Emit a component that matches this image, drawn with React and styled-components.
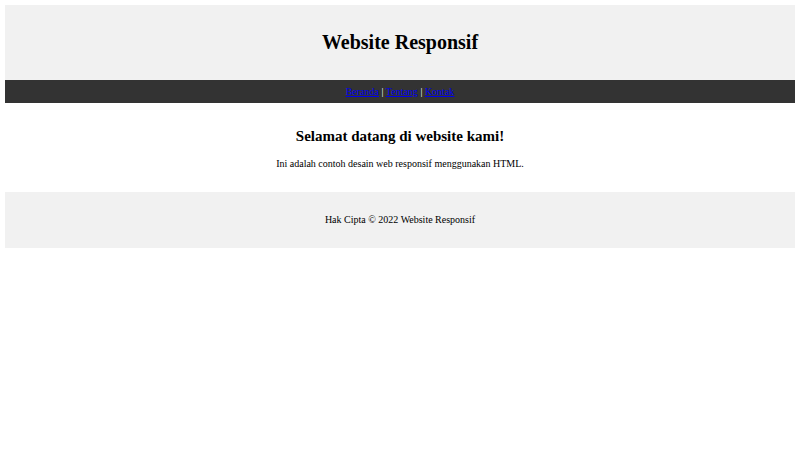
import React from "react";
import styled, { createGlobalStyle } from "styled-components";

const Global = createGlobalStyle`
  body {
    margin: 5px;
    font-family: "Liberation Serif", "Times New Roman", serif;
    background: #fff;
    color: #000;
  }
`;

const Header = styled.header`
  background: #f1f1f1;
  padding: 26px 0;
  text-align: center;
`;

const Title = styled.h1`
  margin: 0;
  font-size: 20px;
  line-height: 23px;
  font-weight: bold;
`;

const Nav = styled.nav`
  background: #333;
  color: #fff;
  text-align: center;
  padding: 6px 0 5.5px;
  font-size: 10px;
  line-height: 11.5px;
`;

const NavLink = styled.a`
  color: #0000ee;
  text-decoration: underline;
`;

const Main = styled.main`
  padding: 12.5px 0;
  text-align: center;
`;

const Heading = styled.h2`
  margin: 12.45px 0;
  font-size: 15px;
  line-height: 17.25px;
  font-weight: bold;
`;

const Para = styled.p`
  margin: 10px 0;
  font-size: 10px;
  line-height: 11.5px;
`;

const Footer = styled.footer`
  background: #f1f1f1;
  padding: 12.5px 0 12px;
  text-align: center;
`;

export default function App() {
  return (
    <>
      <Global />
      <Header>
        <Title>Website Responsif</Title>
      </Header>
      <Nav>
        <NavLink href="#">Beranda</NavLink> | <NavLink href="#">Tentang</NavLink> |{" "}
        <NavLink href="#">Kontak</NavLink>
      </Nav>
      <Main>
        <Heading>Selamat datang di website kami!</Heading>
        <Para>Ini adalah contoh desain web responsif menggunakan HTML.</Para>
      </Main>
      <Footer>
        <Para>Hak Cipta © 2022 Website Responsif</Para>
      </Footer>
    </>
  );
}
